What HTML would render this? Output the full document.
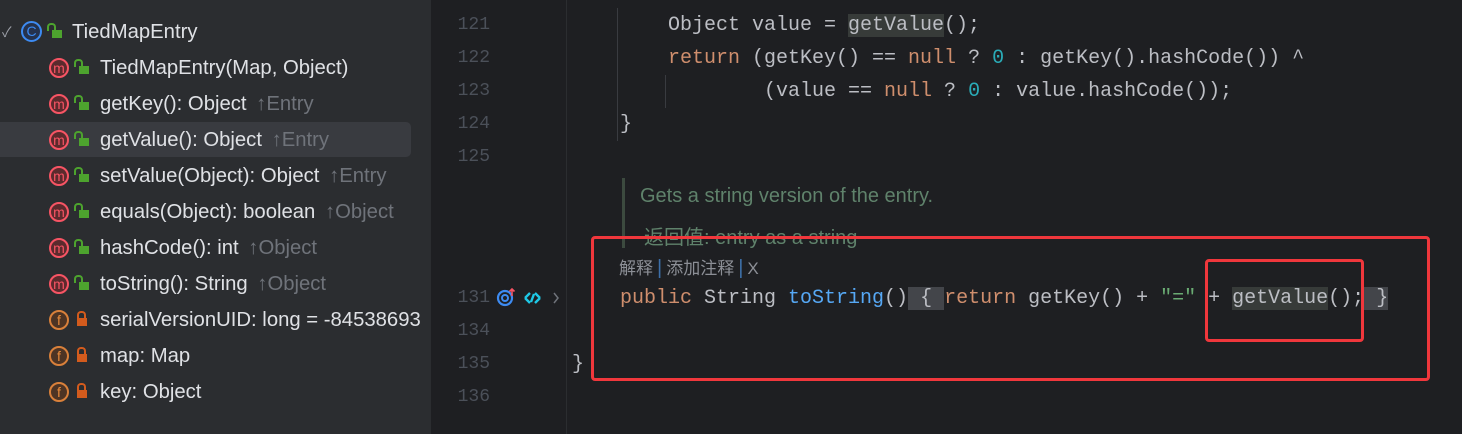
<!DOCTYPE html>
<html><head><meta charset="utf-8"><style>
body{margin:0;width:1462px;height:434px;overflow:hidden;background:#1e1f22;position:relative;font-family:"Liberation Sans","Noto Sans CJK SC",sans-serif}
.left{position:absolute;left:0;top:0;width:431px;height:434px;background:#2b2d30}
.row{position:absolute;left:0;top:0;height:36px;line-height:37px;font-size:20.3px;color:#dfe1e5;white-space:nowrap}
.row .t{position:absolute;left:100px}
.g{color:#6f737a;margin-left:4px}
.ic{position:absolute;top:8px;width:20px;height:20px;border-radius:50%;box-sizing:border-box;font-size:14px;line-height:16px;text-align:center;font-family:"Liberation Sans",sans-serif}
.m{left:49px;border:2px solid #f75464;background:#5c2a2d;color:#f75464}
.f{left:49px;border:2px solid #d9803a;background:#4d3424;color:#e68a3c}
.lk{position:absolute;left:79px;top:16px;width:10px;height:8px;background:#4da32e}
.lk:before{content:"";position:absolute;left:-5px;top:-7px;width:5px;height:6px;border:2px solid #4da32e;border-bottom:none;border-radius:4px 4px 0 0}
.lk.c{background:#d35b1d;left:77px}.lk.c:before{left:0px;border-color:#d35b1d}
.code{position:absolute;font-family:"Liberation Mono",monospace;font-size:20px;color:#bcbec4;white-space:pre;line-height:33px;height:33px}
.ln{position:absolute;left:440px;width:50px;text-align:right;font-family:"Liberation Mono",monospace;font-size:18px;color:#4b5059;line-height:33px}
.k{color:#cf8e6d}.n{color:#2aacb8}.s{color:#6aab73}.d{color:#56a8f5}
.hl{background:#373b39}.br{background:#43454a}
.p{color:#3d6fa8;font-size:20px;margin:0 4px}
</style></head><body>
<div class="left">
<div class="row" style="top:14px"><span style="position:absolute;left:2px;color:#9da0a8;font-size:14px">✓</span><span class="ic" style="left:21px;top:7px;width:21px;height:21px;border:2px solid #3d8bf2;background:#25324d;color:#3d8bf2;line-height:17px;font-size:14px">C</span><span class="lk" style="left:52px;top:16px"></span><span class="t" style="left:72px">TiedMapEntry</span></div>
<div class="row" style="top:50px"><span class="ic m">m</span><span class="lk"></span><span class="t">TiedMapEntry(Map, Object)</span></div>
<div class="row" style="top:86px"><span class="ic m">m</span><span class="lk"></span><span class="t">getKey(): Object <span class="g">↑Entry</span></span></div>
<div style="position:absolute;left:0;top:122px;width:411px;height:35px;background:#393b40;border-radius:0 5px 5px 0"></div>
<div class="row" style="top:122px"><span class="ic m">m</span><span class="lk"></span><span class="t">getValue(): Object <span class="g">↑Entry</span></span></div>
<div class="row" style="top:158px"><span class="ic m">m</span><span class="lk"></span><span class="t">setValue(Object): Object <span class="g">↑Entry</span></span></div>
<div class="row" style="top:194px"><span class="ic m">m</span><span class="lk"></span><span class="t">equals(Object): boolean <span class="g">↑Object</span></span></div>
<div class="row" style="top:230px"><span class="ic m">m</span><span class="lk"></span><span class="t">hashCode(): int <span class="g">↑Object</span></span></div>
<div class="row" style="top:266px"><span class="ic m">m</span><span class="lk"></span><span class="t">toString(): String <span class="g">↑Object</span></span></div>
<div class="row" style="top:302px"><span class="ic f">f</span><span class="lk c"></span><span class="t">serialVersionUID: long = -84538693</span></div>
<div class="row" style="top:338px"><span class="ic f">f</span><span class="lk c"></span><span class="t">map: Map</span></div>
<div class="row" style="top:374px"><span class="ic f">f</span><span class="lk c"></span><span class="t">key: Object</span></div>
</div>
<div style="position:absolute;left:566px;top:0;width:1px;height:434px;background:#2b2d30"></div>
<div style="position:absolute;left:617px;top:8px;width:1px;height:133px;background:#393b40"></div>
<div style="position:absolute;left:665px;top:75px;width:1px;height:33px;background:#393b40"></div>

<div class="ln" style="top:9px">121</div>
<div class="ln" style="top:42px">122</div>
<div class="ln" style="top:75px">123</div>
<div class="ln" style="top:108px">124</div>
<div class="ln" style="top:141px">125</div>
<div class="ln" style="top:282px">131</div>
<div class="ln" style="top:315px">134</div>
<div class="ln" style="top:348px">135</div>
<div class="ln" style="top:381px">136</div>

<div class="code" style="left:668px;top:9px">Object value = <span class="hl">getValue</span>();</div>
<div class="code" style="left:668px;top:42px"><span class="k">return</span> (getKey() == <span class="k">null</span> ? <span class="n">0</span> : getKey().hashCode()) ^</div>
<div class="code" style="left:764px;top:75px">(value == <span class="k">null</span> ? <span class="n">0</span> : value.hashCode());</div>
<div class="code" style="left:620px;top:108px">}</div>

<div style="position:absolute;left:622px;top:178px;width:3px;height:70px;background:#3c4a3f"></div>
<div style="position:absolute;left:640px;top:185px;font-size:20px;color:#5f826b">Gets a string version of the entry.</div>
<div style="position:absolute;left:644px;top:221px;font-size:20px;color:#5f826b">返回值: entry as a string</div>
<div style="position:absolute;left:619px;top:257px;font-size:17px;color:#8c8f96;line-height:22px">解释<span class="p">|</span>添加注释<span class="p">|</span>X</div>

<svg style="position:absolute;left:496px;top:287px" width="66" height="22" viewBox="0 0 66 22">
<circle cx="9" cy="11" r="7" fill="none" stroke="#3d8bf2" stroke-width="2.2"/><circle cx="9" cy="11" r="3" fill="none" stroke="#3d8bf2" stroke-width="2"/>
<path d="M16 9V2M13.5 4.5L16 2L18.5 4.5" stroke="#f75464" stroke-width="1.6" fill="none"/>
<path d="M29 11L34 6M29 11L34 16M44 11L39 6M44 11L39 16M35 15L38 7" stroke="#1ec8e6" stroke-width="2.4" fill="none"/>
<path d="M58 6L62 11L58 16" stroke="#6f737a" stroke-width="1.5" fill="none"/>
</svg>
<div class="code" style="left:620px;top:282px"><span class="k">public</span> String <span class="d">toString</span>()<span class="br"> { </span><span class="k">return</span> getKey() + <span class="s">"="</span> + <span class="hl">getValue</span>();<span class="br"> }</span></div>
<div class="code" style="left:572px;top:348px">}</div>

<div style="position:absolute;left:591px;top:236px;width:839px;height:145px;box-sizing:border-box;border:3px solid #f0373c;border-radius:4px"></div>
<div style="position:absolute;left:1205px;top:259px;width:159px;height:83px;box-sizing:border-box;border:3px solid #f0373c;border-radius:4px"></div>
</body></html>
